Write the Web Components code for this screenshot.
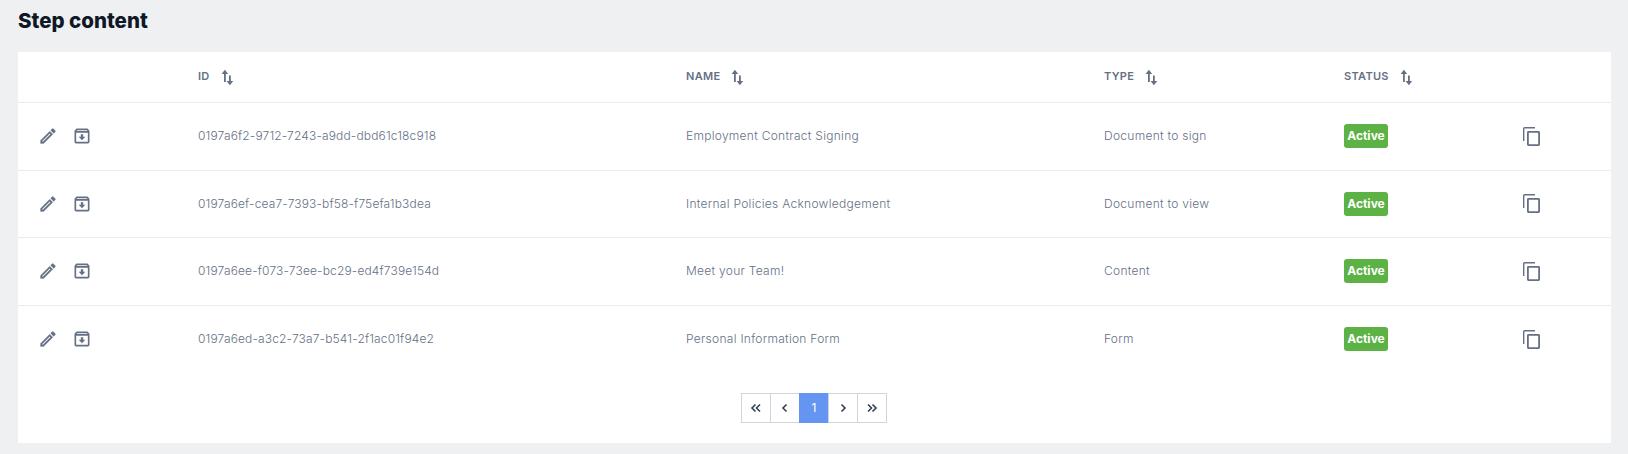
<!DOCTYPE html>
<html>
<head>
<meta charset="utf-8">
<title>Step content</title>
<style>
  html, body { margin: 0; background: #eff0f2; }
  body { font-family: Inter, "Liberation Sans", sans-serif; width: 1628px; height: 454px; overflow: hidden; }
</style>
</head>
<body>
<step-page>
  <span slot="title">Step content</span>
  <step-table>
    <step-head></step-head>
    <step-row uid="0197a6f2-9712-7243-a9dd-dbd61c18c918" name="Employment Contract Signing" type="Document to sign"></step-row>
    <step-row uid="0197a6ef-cea7-7393-bf58-f75efa1b3dea" name="Internal Policies Acknowledgement" type="Document to view"></step-row>
    <step-row uid="0197a6ee-f073-73ee-bc29-ed4f739e154d" name="Meet your Team!" type="Content"></step-row>
    <step-row uid="0197a6ed-a3c2-73a7-b541-2f1ac01f94e2" name="Personal Information Form" type="Form" last></step-row>
    <step-pager></step-pager>
  </step-table>
</step-page>

<script>
  const GRID = 'display: grid; grid-template-columns: 180px 488px 418px 240px 1fr; align-items: center;';
  const SORT = `<svg width="14" height="17" viewBox="0 0 14 17" fill="#667085"><path d="M3 13V3h1.800v10z"/><path d="M0.600 5L3.900 0.800 7.200 5z"/><path d="M8 14V6.500h1.800V14z"/><path d="M5.600 12H12.200L8.900 16.300z"/></svg>`;

  class StepPage extends HTMLElement {
    constructor () {
      super();
      const shadowRoot = this.attachShadow({ mode: 'open' });
      shadowRoot.innerHTML = `
      <style>
        :host { display: block; padding: 9px 17px 11px 18px; }
        h2 { margin: 0 0 19px; height: 24px; font-size: 20.5px; line-height: 24px; font-weight: 800; color: #101828; }
      </style>
      <h2><slot name="title"></slot></h2>
      <slot></slot>`;
    }
  }
  customElements.define('step-page', StepPage);

  class StepTable extends HTMLElement {
    constructor () {
      super();
      const shadowRoot = this.attachShadow({ mode: 'open' });
      shadowRoot.innerHTML = `
      <style>
        :host { display: block; background: #fff; height: 391px; }
      </style>
      <slot></slot>`;
    }
  }
  customElements.define('step-table', StepTable);

  class StepHead extends HTMLElement {
    constructor () {
      super();
      const shadowRoot = this.attachShadow({ mode: 'open' });
      const cell = (label) => `<div class="th"><span class="label">${label}</span>${SORT}</div>`;
      shadowRoot.innerHTML = `
      <style>
        :host { ${GRID} height: 50px; border-bottom: 1px solid #eaecf0; font-size: 11px; font-weight: 600; letter-spacing: .3px; color: #667085; }
        .th { display: flex; align-items: center; gap: 11px; }
        .label { position: relative; top: -1px; }
        svg { display: block; margin-top: 1px; }
      </style>
      <div></div>
      ${cell('ID')}${cell('NAME')}${cell('TYPE')}${cell('STATUS')}`;
    }
  }
  customElements.define('step-head', StepHead);

  class StepRow extends HTMLElement {
    constructor () {
      super();
      const shadowRoot = this.attachShadow({ mode: 'open' });
      shadowRoot.innerHTML = `
      <style>
        :host { ${GRID} height: 66.6px; border-bottom: 1px solid #eaecf0; font-size: 12px; color: #667085; font-weight: 300; }
        :host([last]) { border-bottom-color: transparent; }
        .actions { display: flex; gap: 14px; padding-left: 20px; }
        .uid, .text { padding-bottom: 1px; }
        .uid { letter-spacing: .15px; }
        .text { letter-spacing: .28px; }
        .badge { justify-self: start; background: #5cb245; color: #fff; font-weight: 700; font-size: 12px; line-height: 24px; width: 44px; text-align: center; border-radius: 3px; }
        .status { display: grid; grid-template-columns: 179px 1fr; align-items: center; }
        svg { display: block; }
      </style>
      <div class="actions">
        <svg width="20" height="20" viewBox="0 0 24 24" fill="#667085" stroke="#667085" stroke-width=".3"><path d="M3 17.25V21h3.750L17.810 9.940l-3.750-3.750L3 17.250zM5.920 19H5v-.920l9.060-9.060.920.920L5.920 19zM20.710 7.040a1 1 0 0 0 0-1.410l-2.340-2.340a1 1 0 0 0-1.410 0l-1.830 1.830 3.750 3.750 1.830-1.830z"/></svg>
        <svg width="20" height="20" viewBox="0 0 24 24" fill="#667085"><path d="M20.540 5.230l-1.390-1.680C18.880 3.210 18.470 3 18 3H6c-.470 0-.880.210-1.160.550L3.460 5.230C3.170 5.570 3 6.020 3 6.500V19c0 1.100.900 2 2 2h14c1.100 0 2-.900 2-2V6.500c0-.480-.170-.930-.460-1.270zM6.240 5h11.520l.830 1H5.420l.820-1zM5 19V8h14v11H5zm8.450-9h-2.900v3H8l4 4 4-4h-2.550z"/></svg>
      </div>
      <div class="uid">${this.getAttribute('uid')}</div>
      <div class="text">${this.getAttribute('name')}</div>
      <div class="text">${this.getAttribute('type')}</div>
      <div class="status">
        <span class="badge">Active</span>
        <svg width="17" height="19" viewBox="0 0 17 19" fill="none" stroke="#667085"><path stroke-width="1.400" d="M12 .700H1.500a.800.800 0 0 0-.800.800V14"/><rect x="4.900" y="4.900" width="11.200" height="13.200" rx=".5" stroke-width="1.800"/></svg>
      </div>`;
    }
  }
  customElements.define('step-row', StepRow);

  class StepPager extends HTMLElement {
    constructor () {
      super();
      const shadowRoot = this.attachShadow({ mode: 'open' });
      const chev = (d) => `<svg width="12" height="12" viewBox="0 0 12 12" fill="none" stroke="#344054" stroke-width="1.6"><path d="${d}"/></svg>`;
      shadowRoot.innerHTML = `
      <style>
        :host { display: flex; justify-content: center; padding-top: 19.6px; }
        .btn { width: 28px; height: 28px; border: 1px solid #d0d5dd; margin-left: -1px; display: flex; align-items: center; justify-content: center; background: #fff; font-size: 12px; }
        .btn.on { background: #6495f0; border-color: #6495f0; color: #fff; }
      </style>
      <div class="btn">${chev('M5.500 2.500L2 6l3.500 3.500M10 2.500L6.500 6l3.500 3.500')}</div>
      <div class="btn">${chev('M7.500 2.500L4 6l3.500 3.500')}</div>
      <div class="btn on">1</div>
      <div class="btn">${chev('M4.500 2.500L8 6l-3.500 3.500')}</div>
      <div class="btn">${chev('M2 2.500L5.500 6 2 9.500M6.500 2.500L10 6l-3.500 3.500')}</div>`;
    }
  }
  customElements.define('step-pager', StepPager);
</script>
</body>
</html>
